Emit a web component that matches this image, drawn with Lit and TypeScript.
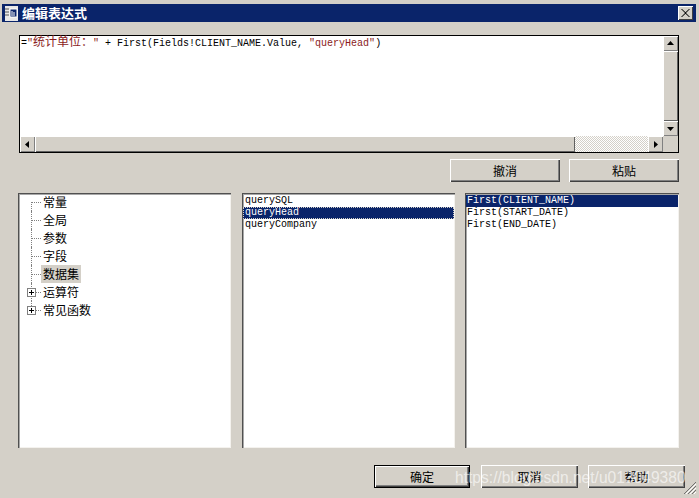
import { LitElement, html, css } from "lit";
import { customElement } from "lit/decorators.js";

const plus = html`<svg class="plus" width="9" height="9" viewBox="0 0 9 9"><rect x=".5" y=".5" width="8" height="8" fill="#fff" stroke="#808080"/><path d="M2 4.500h5M4.500 2v5" stroke="#000" fill="none"/></svg>`;
const arrow = (d: string) => html`<svg width="9" height="9" viewBox="0 0 9 9"><path d="${d}" fill="#000"/></svg>`;

@customElement("app-root")
export class AppRoot extends LitElement {
  static styles = css`
    :host { display: block; width: 699px; height: 498px; position: relative; overflow: hidden; background: #d4d0c8;
      font-family: "Noto Sans CJK SC", sans-serif; font-size: 12px; color: #000; }
    .win { height: 498px; box-sizing: border-box; padding: 4px 3px 0 2px; display: flex; flex-direction: column; }
    .title { height: 18px; flex: none; background: #0a246a; display: flex; align-items: center; padding: 0 3px; color: #fff; font-weight: 700; font-size: 13px; gap: 4px; }
    .title .ico { flex: none; }
    .title span { flex: 1; line-height: 18px; }
    .close { width: 15px; height: 14px; flex: none; background: #d4d0c8; display: flex; align-items: center; justify-content: center; box-shadow: inset 1px 1px 0 #fff, inset -1px -1px 0 #404040; }
    .body { flex: 1; display: flex; flex-direction: column; padding: 13px 17px 0 16px; }
    .editor { flex: none; margin-left: 1px; height: 118px; box-sizing: border-box; border: 1px solid #000; display: flex; flex-direction: column; background: #fff; }
    .top { flex: 1; display: flex; min-height: 0; }
    .text { flex: 1; padding: 0 0 0 1px; margin-top: -2px; font-family: "Liberation Mono", "Noto Sans CJK SC", monospace; font-size: 10px; line-height: 14px; white-space: pre; }
    .str { color: #8a1c1c; }
    .cjk { font-family: "Noto Sans CJK SC", sans-serif; font-size: 12px; }
    .vbar { width: 15px; flex: none; display: flex; flex-direction: column; background: #d4d0c8; }
    .hbar { height: 16px; flex: none; display: flex; background: #d4d0c8; }
    .sb { flex: none; display: flex; align-items: center; justify-content: center; background: #d4d0c8; box-shadow: inset 1px 1px 0 #fff, inset -1px -1px 0 #808080; }
    .vbar .sb { height: 15px; }
    .hbar .sb { width: 15px; }
    .thumb { flex: 1; background: #d4d0c8; box-shadow: inset 1px 1px 0 #fff, inset -1px -1px 0 #606060; }
    .hthumb { width: 540px; flex: none; background: #d4d0c8; box-shadow: inset 1px 1px 0 #fff, inset -1px -1px 0 #606060; }
    .track { flex: 1; background: repeating-conic-gradient(#d4d0c8 0 25%, #fff 0 50%) 0 0 / 2px 2px; }
    .corner { width: 15px; flex: none; }
    .btnrow { display: flex; justify-content: flex-end; gap: 9px; margin-top: 6px; flex: none; }
    .btn { width: 110px; height: 23px; flex: none; box-sizing: border-box; display: flex; align-items: center; justify-content: center; background: #d4d0c8; box-shadow: inset 1px 1px 0 #fff, inset -1px -1px 0 #404040, inset -2px -2px 0 #808080; font-size: 12px; line-height: 1; }
    .panels { display: flex; margin-top: 11px; height: 255px; flex: none; }
    .panel { width: 213px; flex: none; background: #fff; box-sizing: border-box; padding: 2px; box-shadow: inset 1px 1px 0 #505050, inset 2px 2px 0 #a8a8a8, inset -1px -1px 0 #f4f2ee; }
    .p2 { margin-left: 11px; }
    .p3 { margin-left: 10px; width: 214px; }
    .tree { display: flex; flex-direction: column; padding-top: 0; }
    .node { height: 18px; display: flex; align-items: center; position: relative; padding-left: 21px; }
    .node::before { content: ""; position: absolute; left: 11px; top: 0; height: 18px; border-left: 1px dotted #808080; }
    .node.first::before { top: 9px; height: 9px; }
    .node.last::before { height: 9px; }
    .node::after { content: ""; position: absolute; left: 12px; top: 9px; width: 9px; border-top: 1px dotted #808080; }
    .plus { position: absolute; left: 7px; top: 5px; z-index: 1; }
    .lbl { padding: 0 2px; line-height: 18px; height: 18px; }
    .lbl.sel { background: #d4d0c8; }
    .list { display: flex; flex-direction: column; padding: 2px 1px; font-family: "Liberation Mono", monospace; font-size: 10px; }
    .item { height: 12px; line-height: 12px; padding-left: 2px; white-space: pre; }
    .p3 .item { padding-left: 1px; }
    .item.sel { background: #0a246a; color: #fff; }
    .item.focus { outline: 1px dotted #d4d0c8; outline-offset: -1px; }
    .footer { display: flex; justify-content: flex-end; margin-top: 17px; margin-right: -6px; flex: none; }
    .fbtn { width: 97px; }
    .f2 { margin-left: 11px; }
    .f3 { margin-left: 10px; }
    .fbtn.def { width: 96px; border: 1px solid #000; }
    .mark { position: absolute; left: 455px; top: 468px; font-family: "Liberation Sans", sans-serif; font-size: 15.6px; line-height: 20px; color: rgba(255,255,255,.62); white-space: nowrap; }
    .grip { position: absolute; right: 3px; bottom: 4px; }
  `;

  render() {
    const tree = ["常量", "全局", "参数", "字段", "数据集", "运算符", "常见函数"];
    return html`
      <div class="win">
        <div class="title">
          <svg class="ico" width="13" height="15" viewBox="0 0 13 15"><rect width="13" height="15" fill="#e8e8e8"/><path d="M0 3h4M0 6h4M0 9h4" stroke="#555"/><path d="M5 3h7v8h-7z" fill="#0a246a" stroke="#fff"/><path d="M7 5v5M9 6v4" stroke="#fff"/></svg>
          <span>编辑表达式</span>
          <div class="close"><svg width="9" height="8" viewBox="0 0 9 8"><path d="M1 0l3.500 3.200L8 0h1L5 4l4 4H8L4.500 4.800 1 8H0l4-4-4-4z" fill="#000"/></svg></div>
        </div>
        <div class="body">
          <div class="editor">
            <div class="top">
              <div class="text">=<span class="str">"<span class="cjk">统计单位：</span>"</span> + First(Fields!CLIENT_NAME.Value, <span class="str">"queryHead"</span>)</div>
              <div class="vbar">
                <div class="sb">${arrow("M4.500 2L8 6H1z")}</div>
                <div class="thumb"></div>
                <div class="sb">${arrow("M1 3h7L4.500 7z")}</div>
              </div>
            </div>
            <div class="hbar">
              <div class="sb">${arrow("M6 1v7L2 4.500z")}</div>
              <div class="hthumb"></div>
              <div class="track"></div>
              <div class="sb">${arrow("M3 1l4 3.500L3 8z")}</div>
              <div class="corner"></div>
            </div>
          </div>
          <div class="btnrow">
            <div class="btn">撤消</div>
            <div class="btn">粘贴</div>
          </div>
          <div class="panels">
            <div class="panel tree">
              ${tree.map((t, i) => html`
                <div class="node ${i === 0 ? "first" : ""} ${i === tree.length - 1 ? "last" : ""}">
                  ${i >= 5 ? plus : ""}
                  <div class="lbl ${i === 4 ? "sel" : ""}">${t}</div>
                </div>`)}
            </div>
            <div class="panel list p2">
              <div class="item">querySQL</div>
              <div class="item sel focus">queryHead</div>
              <div class="item">queryCompany</div>
            </div>
            <div class="panel list p3">
              <div class="item sel">First(CLIENT_NAME)</div>
              <div class="item">First(START_DATE)</div>
              <div class="item">First(END_DATE)</div>
            </div>
          </div>
          <div class="footer">
            <div class="btn fbtn def">确定</div>
            <div class="btn fbtn f2">取消</div>
            <div class="btn fbtn f3">帮助</div>
          </div>
        </div>
      </div>
      <div class="mark">https://blog.csdn.net/u013049380</div>
      <svg class="grip" width="13" height="13" viewBox="0 0 13 13"><path d="M13 1L1 13M13 5L5 13M13 9L9 13" stroke="#707070" fill="none"/><path d="M13 3L3 13M13 7L7 13M13 11L11 13" stroke="#fff" fill="none"/></svg>
    `;
  }
}
